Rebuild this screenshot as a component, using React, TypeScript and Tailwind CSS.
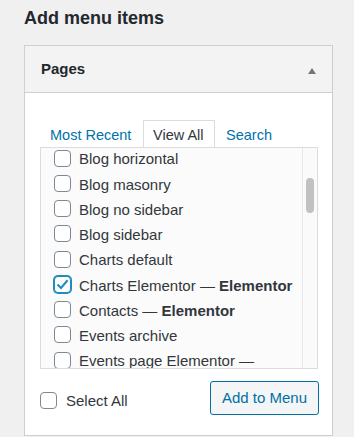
import React from "react";

const items: { label: string; bold?: string; checked?: boolean }[] = [
  { label: "Blog horizontal" },
  { label: "Blog masonry" },
  { label: "Blog no sidebar" },
  { label: "Blog sidebar" },
  { label: "Charts default" },
  { label: "Charts Elementor — ", bold: "Elementor", checked: true },
  { label: "Contacts — ", bold: "Elementor" },
  { label: "Events archive" },
  { label: "Events page Elementor —" },
];

function Box({ checked }: { checked?: boolean }) {
  return (
    <span
      className={
        "flex h-[17px] w-[17px] shrink-0 items-center justify-center rounded-[4px] border bg-white " +
        (checked ? "border-[#1e8cbe] shadow-[0_0_0_1px_#1e8cbe]" : "border-[#7e8993]")
      }
    >
      {checked ? (
        <svg width="15" height="15" viewBox="0 0 15 15">
          <path d="M2.5 7.6 L6 11 L12.6 3.2" fill="none" stroke="#1e8cbe" strokeWidth="2.1" />
        </svg>
      ) : null}
    </span>
  );
}

export default function App() {
  return (
    <div
      className="h-[437px] w-[354px] overflow-hidden bg-[#f0f0f0] pl-[24px] text-[#32373c]"
      style={{ fontFamily: '"Liberation Sans", Arial, sans-serif' }}
    >
      <h2 className="mt-[6px] text-[18px] font-bold leading-[24px] text-[#23282d]">Add menu items</h2>
      <div className="mt-[15px] w-[309px] border border-[#ccd0d4] bg-white">
        <div className="flex h-[47px] items-center justify-between border-b border-[#ccd0d4] bg-[#f3f3f3] pl-[16px] pr-[16px]">
          <span className="text-[15px] font-bold text-[#23282d]">Pages</span>
          <svg width="8" height="6" viewBox="0 0 8 6" className="mt-[3px]">
            <polygon points="4,0 8,6 0,6" fill="#72777c" />
          </svg>
        </div>
        <div className="pb-[20px] pl-[15px] pt-[27px]">
          <div className="flex h-[27px] text-[14.5px]">
            <div className="flex w-[103px] items-center pl-[10px] pt-[4px] text-[#0073aa]">Most Recent</div>
            <div className="flex w-[72px] items-center border-l border-r border-t border-[#dcdcde] bg-white pl-[9px] pt-[3px] text-[#32373c]">
              View All
            </div>
            <div className="flex items-center pl-[11px] pt-[4px] text-[#0073aa]">Search</div>
          </div>
          <div className="flex h-[222px] w-[278px] border border-[#dcdcde] bg-[#fbfbfb]">
            <div className="flex-1 overflow-hidden pl-[13px]">
              <div className="-mt-[1px]">
                {items.map((it, i) => (
                  <div key={i} className="flex h-[25.25px] items-center gap-[8px] text-[15px] whitespace-nowrap">
                    <span className="mb-[3px]">
                      <Box checked={it.checked} />
                    </span>
                    <span>
                      {it.label}
                      {it.bold ? <b className="font-bold">{it.bold}</b> : null}
                    </span>
                  </div>
                ))}
              </div>
            </div>
            <div className="w-[15px] shrink-0 border-l border-[#e8e8e8] bg-[#fafafa] pl-[3px] pt-[30px]">
              <div className="h-[35px] w-[8px] rounded-full bg-[#c1c1c1]" />
            </div>
          </div>
          <div className="mt-[12px] flex w-[279px] items-start justify-between">
            <div className="mt-[11px] flex items-center gap-[9px] text-[15px]">
              <Box />
              <span className="leading-[17px]">Select All</span>
            </div>
            <div className="flex h-[34px] w-[109px] items-center justify-center rounded-[3px] border border-[#0071a1] bg-[#f3f5f6] text-[15px] text-[#0071a1]">
              Add to Menu
            </div>
          </div>
        </div>
      </div>
    </div>
  );
}
